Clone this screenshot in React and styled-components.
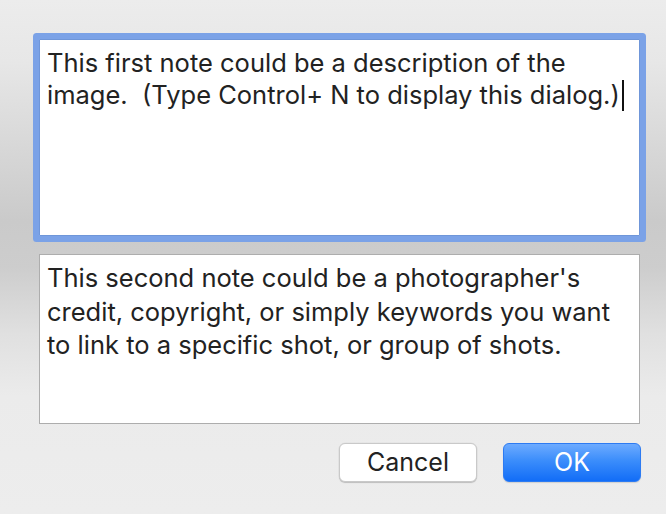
import React from "react";
import styled, { createGlobalStyle } from "styled-components";

const GlobalStyle = createGlobalStyle`
  html, body {
    margin: 0;
    padding: 0;
  }
  body {
    font-family: Inter, "Noto Sans", "Liberation Sans", sans-serif;
    -webkit-font-smoothing: antialiased;
  }
`;

const Window = styled.div`
  width: 666px;
  height: 514px;
  box-sizing: border-box;
  padding: 39px 25px 0 39px;
  display: flex;
  flex-direction: column;
  background: linear-gradient(
    180deg,
    #ececec 0%,
    #e7e7e7 12%,
    #d8d8d8 28%,
    #cacaca 43%,
    #cdcdcd 52%,
    #e0e0e0 65%,
    #ebebeb 77%,
    #ededed 100%
  );
`;

const NoteField = styled.div`
  box-sizing: border-box;
  width: 601px;
  height: ${(p) => p.height}px;
  padding: ${(p) => p.padTop}px 7px 0;
  background: #fff;
  color: #222;
  font-size: 25.5px;
  line-height: ${(p) => p.lineHeight}px;
  white-space: pre;
  border: 1px solid ${(p) => (p.focused ? "#6f96d9" : "#adadad")};
  border-radius: ${(p) => (p.focused ? "1px" : "0")};
  box-shadow: ${(p) => (p.focused ? "0 0 0 6px #7ba2e7" : "none")};
`;

const Caret = styled.span`
  display: inline-block;
  width: 2px;
  height: 31px;
  margin-left: 2px;
  vertical-align: -7px;
  background: #111;
`;

const Spacer = styled.div`
  height: ${(p) => p.size}px;
  flex-shrink: 0;
`;

const ButtonRow = styled.div`
  display: flex;
  justify-content: flex-end;
  gap: 26px;
  width: 602px;
`;

const Button = styled.button`
  box-sizing: border-box;
  width: 138px;
  height: 39px;
  border-radius: 6px;
  font-family: inherit;
  font-size: 25px;
  padding: 0 0 1px;
  cursor: default;
  border: 1px solid ${(p) => (p.primary ? "#2d7bf2" : "#c9c9c9")};
  color: ${(p) => (p.primary ? "#fff" : "#222")};
  background: ${(p) =>
    p.primary
      ? "linear-gradient(180deg, #6dabff 0%, #3b8dfb 45%, #126df7 100%)"
      : "#fff"};
  box-shadow: ${(p) =>
    p.primary
      ? "0 1px 1px rgba(0,0,0,0.12)"
      : "0 1px 1px rgba(0,0,0,0.18), 0 0 0 0.5px rgba(0,0,0,0.05)"};
`;

export default function App() {
  return (
    <>
      <GlobalStyle />
      <Window>
        <NoteField focused height={197} padTop={7} lineHeight={32}>
          {"This first note could be a description of the\nimage.  (Type Control+ N to display this dialog.)"}
          <Caret />
        </NoteField>
        <Spacer size={18} />
        <NoteField height={170} padTop={6} lineHeight={33.7}>
          {"This second note could be a photographer's\ncredit, copyright, or simply keywords you want\nto link to a specific shot, or group of shots."}
        </NoteField>
        <Spacer size={19} />
        <ButtonRow>
          <Button>Cancel</Button>
          <Button primary>OK</Button>
        </ButtonRow>
      </Window>
    </>
  );
}
